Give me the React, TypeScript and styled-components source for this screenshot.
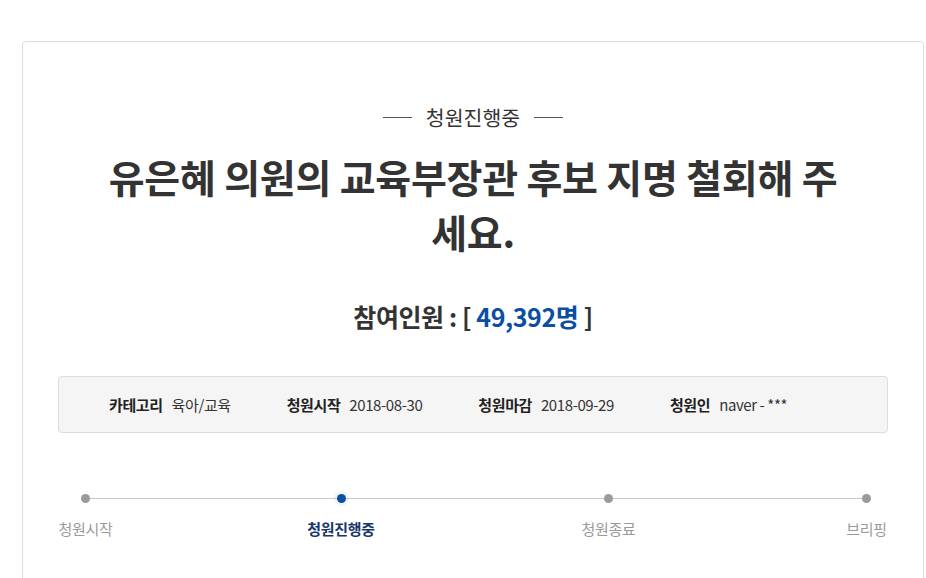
import React from 'react';
import styled, { createGlobalStyle } from 'styled-components';

const GlobalStyle = createGlobalStyle`
  html, body {
    margin: 0;
    padding: 0;
    background: #ffffff;
  }
  body {
    font-family: 'Noto Sans CJK KR', 'Noto Sans', sans-serif;
    color: #333;
  }
`;

const Card = styled.section`
  box-sizing: border-box;
  width: 902px;
  margin: 41px 0 0 22px;
  padding: 60px 35px 90px;
  border: 1px solid #dddddd;
  border-radius: 4px 4px 0 0;
  background: #fff;
`;

const Status = styled.div`
  display: flex;
  align-items: center;
  justify-content: center;
  gap: 14px;
  font-size: 20.5px;
  color: #333;
  line-height: 30px;

  &::before,
  &::after {
    content: '';
    width: 29px;
    height: 1px;
    background: #555;
  }
`;

const Title = styled.h1`
  margin: 17px auto 0;
  max-width: 760px;
  font-size: 39px;
  font-weight: 700;
  line-height: 55px;
  text-align: center;
  color: #333;
  letter-spacing: -0.25px;
`;

const Count = styled.h2`
  margin: 40px 0 0;
  font-size: 25px;
  font-weight: 700;
  text-align: center;
  line-height: 34px;
  color: #333;
  letter-spacing: -0.4px;
`;

const Number = styled.span`
  color: #0b4ea2;
`;

const InfoBox = styled.ul`
  display: flex;
  align-items: center;
  gap: 56px;
  margin: 43px 0 0;
  padding: 0 0 0 50px;
  height: 55px;
  list-style: none;
  background: #f5f5f5;
  border: 1px solid #dddddd;
  border-radius: 4px;
  font-size: 15px;
`;

const InfoItem = styled.li`
  display: flex;
  align-items: center;
  gap: 9px;
  color: #333;
  letter-spacing: -0.4px;
`;

const InfoLabel = styled.strong`
  font-weight: 700;
  color: #222;
`;

const Steps = styled.ol`
  position: relative;
  display: grid;
  grid-template-columns: 55px 194fr 68px 206fr 55px 209fr 43px;
  margin: 61px 0 0;
  padding: 0;
  list-style: none;

  &::before {
    content: '';
    position: absolute;
    top: 4px;
    left: 27px;
    right: 22px;
    height: 1px;
    background: #c8c8c8;
  }
`;

const Step = styled.li<{ $col: number }>`
  grid-column: ${(p) => p.$col};
  display: flex;
  flex-direction: column;
  align-items: center;
  gap: 16px;
  white-space: nowrap;
`;

const Dot = styled.span<{ $active?: boolean }>`
  position: relative;
  width: 9px;
  height: 9px;
  border-radius: 50%;
  background: ${(p) => (p.$active ? '#0b4ea2' : '#9a9a9a')};
  box-shadow: ${(p) => (p.$active ? '0 0 0 3px rgba(11, 78, 162, 0.06)' : 'none')};
`;

const StepLabel = styled.span<{ $active?: boolean }>`
  font-size: 15px;
  line-height: 20px;
  font-weight: ${(p) => (p.$active ? 700 : 400)};
  color: ${(p) => (p.$active ? '#17366e' : '#9a9a9a')};
  letter-spacing: -0.3px;
`;

const steps = [
  { label: '청원시작', col: 1 },
  { label: '청원진행중', col: 3, active: true },
  { label: '청원종료', col: 5 },
  { label: '브리핑', col: 7 },
];

const info = [
  { label: '카테고리', value: '육아/교육' },
  { label: '청원시작', value: '2018-08-30' },
  { label: '청원마감', value: '2018-09-29' },
  { label: '청원인', value: 'naver - ***' },
];

const App: React.FC = () => {
  return (
    <>
      <GlobalStyle />
      <Card>
        <Status>청원진행중</Status>
        <Title>유은혜 의원의 교육부장관 후보 지명 철회해 주세요.</Title>
        <Count>
          참여인원 : [ <Number>49,392명</Number> ]
        </Count>
        <InfoBox>
          {info.map((item) => (
            <InfoItem key={item.label}>
              <InfoLabel>{item.label}</InfoLabel>
              {item.value}
            </InfoItem>
          ))}
        </InfoBox>
        <Steps>
          {steps.map((s) => (
            <Step key={s.label} $col={s.col}>
              <Dot $active={s.active} />
              <StepLabel $active={s.active}>{s.label}</StepLabel>
            </Step>
          ))}
        </Steps>
      </Card>
    </>
  );
};

export default App;
